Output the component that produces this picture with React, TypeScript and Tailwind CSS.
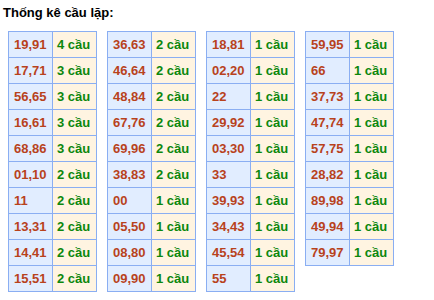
import React from "react";

const tables: [string, number][][] = [
  [["19,91", 4], ["17,71", 3], ["56,65", 3], ["16,61", 3], ["68,86", 3], ["01,10", 2], ["11", 2], ["13,31", 2], ["14,41", 2], ["15,51", 2]],
  [["36,63", 2], ["46,64", 2], ["48,84", 2], ["67,76", 2], ["69,96", 2], ["38,83", 2], ["00", 1], ["05,50", 1], ["08,80", 1], ["09,90", 1]],
  [["18,81", 1], ["02,20", 1], ["22", 1], ["29,92", 1], ["03,30", 1], ["33", 1], ["39,93", 1], ["34,43", 1], ["45,54", 1], ["55", 1]],
  [["59,95", 1], ["66", 1], ["37,73", 1], ["47,74", 1], ["57,75", 1], ["28,82", 1], ["89,98", 1], ["49,94", 1], ["79,97", 1]],
];

export default function App() {
  return (
    <div className="w-[434px] h-[300px] bg-white" style={{ fontFamily: '"Liberation Sans", Arial, sans-serif' }}>
      <div className="pl-[3px] pt-[5px] text-[13px] leading-[15px] font-bold text-black">Thống kê cầu lặp:</div>
      <div className="flex items-start gap-[10px] pl-[8px] mt-[11px]">
        {tables.map((t, i) => (
          <div key={i} className="w-[89px] border-t border-l border-[#8aaef2]">
            {t.map(([n, c], j) => (
              <div key={j} className="flex h-[26px] text-[13px] font-bold">
                <div className="w-[44px] h-[26px] border-r border-b border-[#8aaef2] bg-[#e1edff] text-[#b8421c] pl-[5px] flex items-center">{n}</div>
                <div className="w-[44px] h-[26px] border-r border-b border-[#8aaef2] bg-[#fff4e1] text-[#0d870d] pl-[4px] flex items-center">{c} cầu</div>
              </div>
            ))}
          </div>
        ))}
      </div>
    </div>
  );
}
